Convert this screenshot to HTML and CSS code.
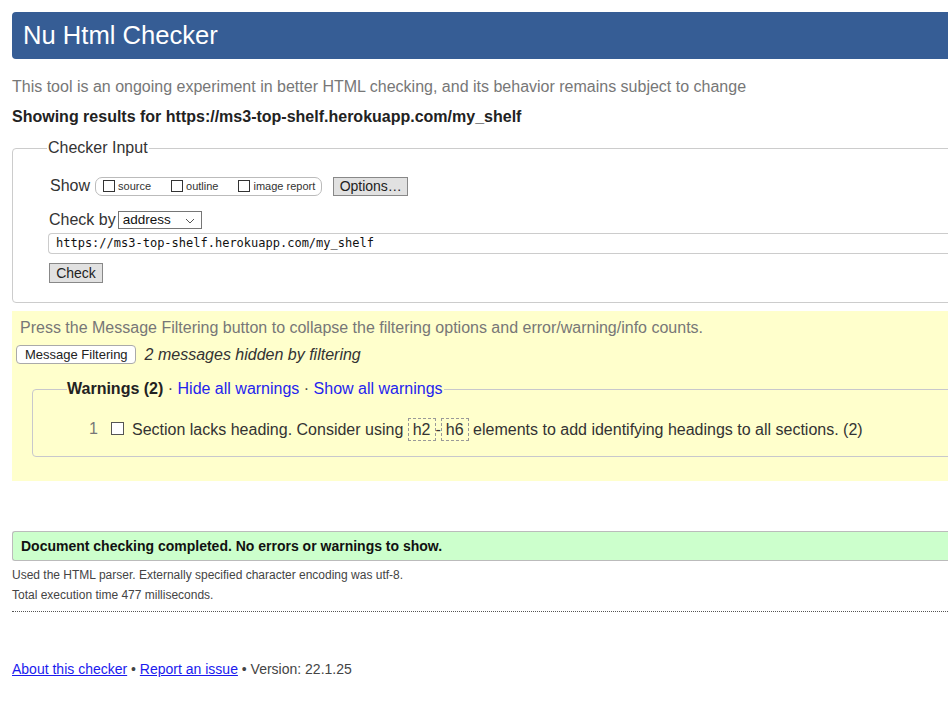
FILE: index.html
```html
<!DOCTYPE html>
<html>
<head>
<meta charset="utf-8">
<title>Nu Html Checker</title>
<link rel="stylesheet" href="styles.css">
</head>
<body>
<div class="page">
  <h1 class="title">Nu Html Checker</h1>
  <p class="intro">This tool is an ongoing experiment in better HTML checking, and its behavior remains subject to change</p>
  <p class="results-for">Showing results for https://ms3-top-shelf.herokuapp.com/my_shelf</p>

  <fieldset class="checker">
    <legend class="checker-legend">Checker Input</legend>
    <div class="show-row">
      <span class="label">Show</span>
      <span class="show-pill">
        <span class="opt"><span class="cb"></span>source</span>
        <span class="opt"><span class="cb"></span>outline</span>
        <span class="opt"><span class="cb"></span>image report</span>
      </span>
      <span class="btn btn-options">Options…</span>
    </div>
    <div class="checkby-row">
      <span class="label">Check by</span>
      <span class="select">address
        <svg class="chev" width="10" height="6" viewBox="0 0 10 6"><path d="M1 1 L5 5 L9 1" fill="none" stroke="#555" stroke-width="1"/></svg>
      </span>
    </div>
    <div class="url-input">https://ms3-top-shelf.herokuapp.com/my_shelf</div>
    <span class="btn btn-check">Check</span>
  </fieldset>

  <section class="filtering">
    <p class="filter-note">Press the Message Filtering button to collapse the filtering options and error/warning/info counts.</p>
    <div class="filter-row">
      <span class="btn-filter">Message Filtering</span>
      <em class="hidden-count">2 messages hidden by filtering</em>
    </div>
    <fieldset class="warnings">
      <legend class="warnings-legend"><strong>Warnings (2)</strong> · <a href="#">Hide all warnings</a> · <a href="#">Show all warnings</a></legend>
      <div class="warning-item">
        <span class="num">1</span>
        <span class="cb cb-item"></span>
        <span class="msg">Section lacks heading. Consider using <code class="tag">h2</code>-<code class="tag">h6</code> elements to add identifying headings to all sections. (2)</span>
      </div>
    </fieldset>
  </section>

  <p class="success">Document checking completed. No errors or warnings to show.</p>
  <p class="details">Used the HTML parser. Externally specified character encoding was utf-8.</p>
  <p class="details">Total execution time 477 milliseconds.</p>
  <hr class="dots">

  <p class="footer"><a href="#">About this checker</a> • <a href="#">Report an issue</a> • Version: 22.1.25</p>
</div>
</body>
</html>
```

FILE: styles.css
```css
html, body {
  margin: 0;
  padding: 0;
  overflow: hidden;
  background: #fff;
}
body {
  font-family: "Liberation Sans", Arial, sans-serif;
  color: #222;
  font-size: 16px;
}
.page {
  width: 1000px;
  padding: 12px 0 0 12px;
}
.title {
  margin: 0;
  height: 47px;
  box-sizing: border-box;
  background: #365d95;
  color: #fff;
  font-weight: normal;
  font-size: 25.6px;
  line-height: 47px;
  padding-left: 11px;
  border-radius: 4px 0 0 4px;
}
.intro {
  margin: 18px 0 0;
  color: #777;
  line-height: 20px;
}
.results-for {
  margin: 10px 0 0;
  font-weight: bold;
  line-height: 20px;
}
.checker {
  margin: 12px 0 0;
  padding: 19px 0 19px 36px;
  border: 1px solid #ccc;
  border-radius: 4px 0 0 4px;
}
.checker-legend {
  padding: 0 1px;
  margin-left: -2px;
  color: #333;
  font-size: 16px;
}
.label {
  color: #333;
}
.show-row {
  display: flex;
  align-items: center;
  height: 20px;
  margin-left: 1px;
}
.show-pill {
  display: flex;
  align-items: center;
  height: 19px;
  box-sizing: border-box;
  margin-left: 5px;
  padding: 0 6px 0 7px;
  border: 1px solid #bbb;
  border-radius: 7px;
  font-size: 11px;
  color: #333;
}
.opt {
  display: flex;
  align-items: flex-end;
  margin-right: 20px;
}
.opt:last-child { margin-right: 0; }
.cb {
  display: inline-block;
  width: 12px;
  height: 12px;
  box-sizing: border-box;
  border: 1px solid #333;
  background: #fff;
  margin-right: 3px;
}
.btn {
  display: inline-block;
  box-sizing: border-box;
  background: #e1e1e1;
  border: 1px solid #888;
  font-size: 14px;
  color: #222;
  text-align: center;
}
.btn-options {
  margin-left: 11px;
  width: 75px;
  height: 19px;
  line-height: 17px;
}
.checkby-row {
  display: flex;
  align-items: center;
  margin-top: 14px;
  height: 20px;
}
.select {
  position: relative;
  display: inline-block;
  margin-left: 2px;
  width: 84px;
  height: 18px;
  box-sizing: border-box;
  border: 1px solid #767676;
  font-size: 13.5px;
  line-height: 16px;
  padding-left: 4px;
  color: #111;
}
.chev {
  position: absolute;
  right: 6px;
  top: 6px;
}
.url-input {
  margin: 3px 0 0 -1px;
  height: 21px;
  box-sizing: border-box;
  border: 1px solid #ccc;
  border-right: none;
  border-radius: 4px 0 0 4px;
  font-family: "DejaVu Sans Mono", "Liberation Mono", monospace;
  font-size: 12px;
  line-height: 19px;
  padding-left: 7px;
  color: #111;
}
.btn-check {
  margin-top: 9px;
  width: 54px;
  height: 20px;
  line-height: 18px;
}
.filtering {
  margin-top: 8px;
  background: #ffffcc;
  padding: 7px 0 24px 0;
}
.filter-note {
  margin: 0 0 0 8px;
  color: #777;
  line-height: 20px;
}
.filter-row {
  display: flex;
  align-items: center;
  margin: 7px 0 0 4px;
  height: 19px;
}
.btn-filter {
  display: inline-block;
  height: 19px;
  box-sizing: border-box;
  background: #fff;
  border: 1px solid #aaa;
  border-radius: 4px;
  font-size: 13px;
  line-height: 17px;
  padding: 0 7px 0 8px;
  color: #222;
}
.hidden-count {
  margin-left: 9px;
  color: #333;
}
.warnings {
  margin: 16px 0 0 20px;
  padding: 19px 0 15px 56px;
  border: 1px solid #c8c8cc;
  border-radius: 4px 0 0 4px;
}
.warnings-legend {
  margin-left: -22px;
  padding: 0 1px 0 0;
  color: #444;
  font-size: 16px;
}
.warnings-legend strong {
  color: #222;
}
.warnings-legend a {
  color: #2424ee;
  text-decoration: none;
}
.warning-item {
  display: flex;
  align-items: center;
  height: 24px;
}
.num {
  color: #777;
  width: 22px;
}
.cb-item {
  width: 13px;
  height: 13px;
  border-color: #555;
  margin-right: 8px;
  margin-top: -2px;
}
.msg {
  color: #333;
}
.tag {
  display: inline-block;
  font-family: "Liberation Sans", Arial, sans-serif;
  font-size: 16px;
  border: 1px dashed #999;
  padding: 2px 4px 1px;
  line-height: 18px;
  color: #333;
}
.success {
  margin: 50px 0 0;
  height: 30px;
  box-sizing: border-box;
  background: #ccffcc;
  border: 1px solid #bbb;
  border-right: none;
  border-radius: 3px 0 0 3px;
  font-weight: bold;
  font-size: 14px;
  line-height: 28px;
  padding-left: 8px;
  color: #111;
}
.details {
  margin: 0;
  font-size: 12px;
  line-height: 20px;
  color: #444;
}
.success + .details {
  margin-top: 4px;
}
.dots {
  margin: 6px 0 0;
  border: none;
  border-top: 1px dotted #555;
  height: 0;
}
.footer {
  margin: 47px 0 0;
  font-size: 14px;
  color: #444;
  line-height: 20px;
}
.footer a {
  color: #1a1aee;
}
```
